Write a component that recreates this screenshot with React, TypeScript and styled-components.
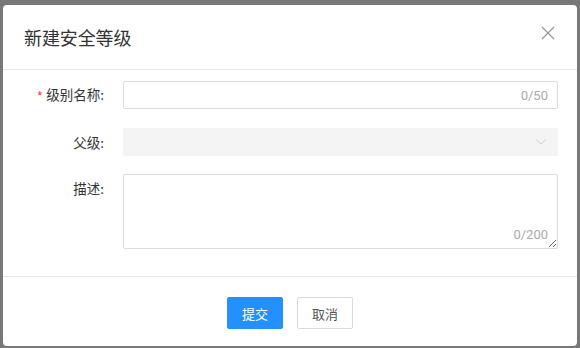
import styled, { createGlobalStyle } from 'styled-components'

const GlobalStyle = createGlobalStyle`
  html, body {
    margin: 0;
    padding: 0;
    background: #787878;
    font-family: 'Noto Sans CJK SC', 'Noto Sans', sans-serif;
    overflow: hidden;
  }
  * { box-sizing: border-box; }
`

const Dialog = styled.div`
  width: 574px;
  height: 341px;
  margin: 5px 0 0 3px;
  background: #fff;
  border-radius: 4px;
  display: flex;
  flex-direction: column;
`

const Header = styled.div`
  height: 65px;
  padding: 0 22px 0 21px;
  display: flex;
  align-items: center;
  justify-content: space-between;
  border-bottom: 1px solid #e8e8e8;
`

const Title = styled.div`
  font-size: 18px;
  color: #333;
  letter-spacing: -0.1px;
  margin-top: -1px;
`

const Close = styled.button`
  border: none;
  background: none;
  padding: 0;
  width: 14px;
  height: 14px;
  margin-top: -9px;
  display: flex;
  cursor: pointer;
`

const Form = styled.div`
  display: flex;
  flex-direction: column;
  gap: 18px;
  padding: 10px 19px 27px 0;
  border-bottom: 1px solid #e8e8e8;
`

const Row = styled.div<{ $top?: boolean }>`
  display: grid;
  grid-template-columns: 101px 1fr;
  column-gap: 19px;
  align-items: ${p => (p.$top ? 'start' : 'center')};
`

const Label = styled.label`
  text-align: right;
  font-size: 13.5px;
  color: #333;
  line-height: 28px;
  white-space: nowrap;
`

const Star = styled.span`
  color: #f5222d;
  font-family: 'Liberation Sans', sans-serif;
  font-size: 12px;
  margin-right: 4px;
`

const Field = styled.div`
  position: relative;
  display: flex;
`

const Input = styled.input`
  width: 100%;
  height: 28px;
  border: 1px solid #dcdcdf;
  border-radius: 2px;
  padding: 0 44px 0 10px;
  font: inherit;
  font-size: 13px;
  outline: none;
`

const TextArea = styled.textarea`
  width: 100%;
  height: 75px;
  border: 1px solid #dcdcdf;
  border-radius: 2px;
  padding: 6px 10px;
  font: inherit;
  font-size: 13px;
  outline: none;
  resize: vertical;
  display: block;
`

const Count = styled.span<{ $bottom?: boolean }>`
  position: absolute;
  right: 10px;
  ${p => (p.$bottom ? 'bottom: 7px;' : 'top: 50%; transform: translateY(-50%);')}
  font-family: Roboto, 'Liberation Sans', sans-serif;
  font-size: 13px;
  color: #aaa;
  pointer-events: none;
`

const Select = styled.div`
  width: 100%;
  height: 28px;
  background: #f4f4f4;
  border-radius: 2px;
  display: flex;
  align-items: center;
  justify-content: flex-end;
  padding-right: 11px;
`

const Footer = styled.div`
  display: flex;
  justify-content: center;
  gap: 14px;
  padding-top: 20px;
`

const Button = styled.button<{ $primary?: boolean }>`
  width: 56px;
  height: 32px;
  border-radius: 2px;
  font-family: inherit;
  font-size: 13px;
  border: 1px solid ${p => (p.$primary ? '#2490fb' : '#d9d9de')};
  background: ${p => (p.$primary ? '#2490fb' : '#fff')};
  color: ${p => (p.$primary ? '#fff' : '#555')};
  cursor: pointer;
`

const App = () => {
  return (
    <>
      <GlobalStyle />
      <Dialog>
        <Header>
          <Title>新建安全等级</Title>
          <Close aria-label='close'>
            <svg width={14} height={14} viewBox='0 0 14 14'>
              <path d='M1 1L13 13M13 1L1 13' stroke='#999' strokeWidth={1.3} fill='none' />
            </svg>
          </Close>
        </Header>
        <Form>
          <Row>
            <Label><Star>*</Star>级别名称:</Label>
            <Field>
              <Input />
              <Count>0/50</Count>
            </Field>
          </Row>
          <Row>
            <Label>父级:</Label>
            <Select>
              <svg width={12} height={8} viewBox='0 0 12 8'>
                <path d='M1 1.5L6 6L11 1.5' stroke='#cfcfcf' strokeWidth={1} fill='none' />
              </svg>
            </Select>
          </Row>
          <Row $top>
            <Label>描述:</Label>
            <Field>
              <TextArea />
              <Count $bottom>0/200</Count>
            </Field>
          </Row>
        </Form>
        <Footer>
          <Button $primary>提交</Button>
          <Button>取消</Button>
        </Footer>
      </Dialog>
    </>
  )
}

export default App
